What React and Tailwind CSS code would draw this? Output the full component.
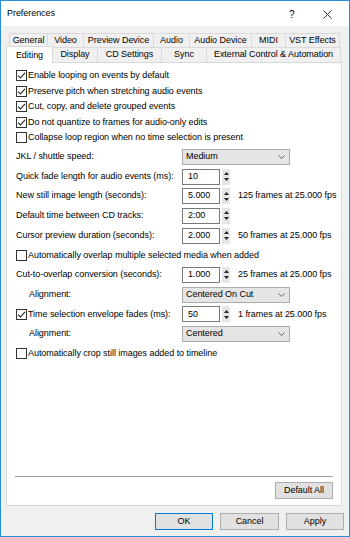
import React from 'react';

const font = { fontFamily: '"Liberation Sans", Arial, sans-serif' };

function CheckBox({ checked }) {
  return (
    <span className="w-[11px] h-[11px] border border-[#333333] bg-white flex items-center justify-center shrink-0">
      {checked && (
        <svg width="9" height="9" viewBox="0 0 9 9">
          <path d="M1 4.6 L3.4 7 L8 1.8" stroke="#222" strokeWidth="1.1" fill="none" />
        </svg>
      )}
    </span>
  );
}

function CheckRow({ checked, label, tall }) {
  return (
    <div className={`${tall ? 'h-[19.7px]' : 'h-[15.5px]'} flex items-center pl-[9px] gap-[1px]`}>
      <CheckBox checked={checked} />
      <span className="whitespace-nowrap">{label}</span>
    </div>
  );
}

function Spinner() {
  return (
    <div className="w-[8px] h-[16px] ml-[2px] bg-[#e6e6e6] flex flex-col items-center justify-center gap-[3px]">
      <svg width="5" height="3" viewBox="0 0 5 3">
        <path d="M0 3 L2.5 0 L5 3 Z" fill="#222" />
      </svg>
      <svg width="5" height="3" viewBox="0 0 5 3">
        <path d="M0 0 L2.5 3 L5 0 Z" fill="#222" />
      </svg>
    </div>
  );
}

function SpinField({ label, value, note, indent, checked }) {
  return (
    <div className="h-[19.7px] flex items-center pl-[9px]">
      {checked !== undefined ? (
        <div className="w-[166px] flex items-center gap-[1px]">
          <CheckBox checked={checked} />
          <span className="whitespace-nowrap">{label}</span>
        </div>
      ) : (
        <span className={`whitespace-nowrap ${indent ? 'w-[153px] ml-[13px]' : 'w-[166px]'}`}>{label}</span>
      )}
      <div className="w-[38px] h-[16px] border border-[#7a7a7a] bg-white flex items-center pl-[5px]">
        {value}
      </div>
      <Spinner />
      {note && <span className="ml-[8px] whitespace-nowrap">{note}</span>}
    </div>
  );
}

function SelectField({ label, value, indent }) {
  return (
    <div className="h-[19.7px] flex items-center pl-[9px]">
      <span className={`whitespace-nowrap ${indent ? 'w-[153px] ml-[13px]' : 'w-[166px]'}`}>{label}</span>
      <div className="w-[108px] h-[16px] border border-[#acacac] bg-[#e5e5e5] flex items-center justify-between pl-[3px] pr-[4px]">
        <span>{value}</span>
        <svg width="7" height="4" viewBox="0 0 7 4">
          <path d="M0.5 0.5 L3.5 3.5 L6.5 0.5" stroke="#606060" strokeWidth="1" fill="none" />
        </svg>
      </div>
    </div>
  );
}

const rowOne = [
  ['General', 39],
  ['Video', 37],
  ['Preview Device', 71],
  ['Audio', 37],
  ['Audio Device', 63],
  ['MIDI', 35],
  ['VST Effects', 55],
];

const rowTwo = [
  ['Display', 46],
  ['CD Settings', 65],
  ['Sync', 46],
  ['External Control & Automation', 135],
];

export default function App() {
  return (
    <div
      className="w-[350px] h-[537px] border border-[#2b8ddd] bg-[#f0f0f0] flex flex-col text-[9px] tracking-[-0.05px] text-black overflow-hidden"
      style={font}
    >
      {/* title bar */}
      <div className="h-[25px] bg-white flex items-center pl-[6px] pt-[1px] shrink-0">
        <span className="flex-1">Preferences</span>
        <span className="w-[16px] text-[10px]">?</span>
        <div className="w-[44px] flex justify-center">
          <svg width="9" height="9" viewBox="0 0 9 9">
            <path d="M0.5 0.5 L8.5 8.5 M8.5 0.5 L0.5 8.5" stroke="#333" strokeWidth="1" />
          </svg>
        </div>
      </div>

      {/* tabs */}
      <div className="pt-[7px] shrink-0">
        <div className="flex ml-[8px] h-[14px]">
          {rowOne.map(([name, w], i) => (
            <div
              key={name}
              className={`h-[14px] border-t border-l border-r border-[#d9d9d9] bg-[#f0f0f0] flex items-center justify-center whitespace-nowrap ${i > 0 ? '-ml-px' : ''}`}
              style={{ width: w }}
            >
              {name}
            </div>
          ))}
        </div>
        <div className="flex items-end ml-[5px] h-[15px]">
          <div className="relative z-10 w-[47px] h-[17px] -mb-px bg-white border-t border-l border-r border-[#d9d9d9] flex items-start justify-center pt-[2px]">
            Editing
          </div>
          {rowTwo.map(([name, w]) => (
            <div
              key={name}
              className="h-[15px] -ml-px border-t border-l border-r border-[#d9d9d9] bg-[#f0f0f0] flex items-center justify-center whitespace-nowrap"
              style={{ width: w }}
            >
              {name}
            </div>
          ))}
        </div>
      </div>

      {/* panel */}
      <div className="ml-[5px] mr-[7px] h-[444px] border border-[#d9d9d9] bg-white flex flex-col pt-[5px] pb-[6px] shrink-0">
        <CheckRow checked label="Enable looping on events by default" />
        <CheckRow checked label="Preserve pitch when stretching audio events" />
        <CheckRow checked label="Cut, copy, and delete grouped events" />
        <CheckRow checked label="Do not quantize to frames for audio-only edits" />
        <CheckRow label="Collapse loop region when no time selection is present" />

        <div className="mt-[1.5px]">
          <SelectField label="JKL / shuttle speed:" value="Medium" />
          <SpinField label="Quick fade length for audio events (ms):" value="10" />
          <SpinField label="New still image length (seconds):" value="5.000" note="125 frames at 25.000 fps" />
          <SpinField label="Default time between CD tracks:" value="2:00" />
          <SpinField label="Cursor preview duration (seconds):" value="2.000" note="50 frames at 25.000 fps" />
          <CheckRow tall label="Automatically overlap multiple selected media when added" />
          <SpinField label="Cut-to-overlap conversion (seconds):" value="1.000" note="25 frames at 25.000 fps" />
          <SelectField indent label="Alignment:" value="Centered On Cut" />
          <SpinField checked label="Time selection envelope fades (ms):" value="50" note="1 frames at 25.000 fps" />
          <SelectField indent label="Alignment:" value="Centered" />
          <CheckRow tall label="Automatically crop still images added to timeline" />
        </div>

        <div className="flex-1" />
        <div className="mx-[8px] h-px bg-[#a0a0a0]" />
        <div className="flex justify-end mr-[8px] mt-[5px]">
          <button className="w-[58px] h-[17px] border border-[#adadad] bg-[#e1e1e1] flex items-center justify-center">
            Default All
          </button>
        </div>
      </div>

      {/* dialog buttons */}
      <div className="flex justify-end gap-[7px] pr-[5px] pt-[7px]">
        <button className="w-[58px] h-[17px] border border-[#0078d7] bg-[#e1e1e1] flex items-center justify-center">
          OK
        </button>
        <button className="w-[59px] h-[17px] border border-[#adadad] bg-[#e1e1e1] flex items-center justify-center">
          Cancel
        </button>
        <button className="w-[58px] h-[17px] border border-[#adadad] bg-[#e1e1e1] flex items-center justify-center">
          Apply
        </button>
      </div>
    </div>
  );
}
